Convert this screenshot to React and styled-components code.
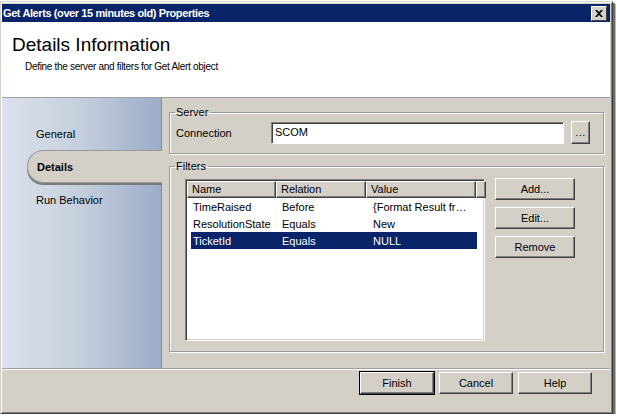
import React from 'react';
import styled, { createGlobalStyle } from 'styled-components';

const GlobalStyle = createGlobalStyle`
  html, body {
    margin: 0;
    padding: 0;
    background: #ffffff;
  }
  body {
    font-family: 'Liberation Sans', Arial, sans-serif;
    font-size: 11px;
    color: #000;
  }
`

const Window = styled.div`
  width: 613px;
  height: 413px;
  margin-top: 1px;
  display: flex;
  flex-direction: column;
  background: #d4d0c8;
  border-left: 1px solid #d4d0c8;
  border-top: 1px solid #d4d0c8;
  border-right: 1px solid #404040;
  border-bottom: 1px solid #404040;
  box-shadow: inset 1px 1px #ffffff, inset -1px -1px #808080, 2px 2px 0 #6a6a6a, 3px 3px 0 #b8b8b8;
  padding: 2px 2px 2px 1px;
  box-sizing: border-box;
`

const TitleBar = styled.div`
  height: 18px;
  flex: none;
  background: #0a246a;
  display: flex;
  align-items: center;
  justify-content: space-between;
  padding: 0 3px 0 1px;
`

const TitleText = styled.span`
  color: #fff;
  font-weight: bold;
  font-size: 11px;
  letter-spacing: -0.4px;
`

const CloseButton = styled.div`
  width: 14px;
  height: 13px;
  background: #d4d0c8;
  border-top: 1px solid #fff;
  border-left: 1px solid #fff;
  border-right: 1px solid #404040;
  border-bottom: 1px solid #404040;
  display: flex;
  align-items: center;
  justify-content: center;
`

const Header = styled.div`
  height: 76px;
  flex: none;
  background: #fff;
  border-bottom: 1px solid #a0a0a0;
  padding: 11px 0 0 10px;
  box-sizing: border-box;
`

const Heading = styled.div`
  font-size: 19px;
  line-height: 23px;
`

const SubHeading = styled.div`
  margin: 5px 0 0 13px;
  font-size: 10px;
  letter-spacing: -0.3px;
`

const Body = styled.div`
  flex: 1;
  display: flex;
  min-height: 0;
  border-bottom: 1px solid #a0a0a0;
  box-shadow: 0 1px 0 #fff;
`

const Sidebar = styled.div`
  width: 160px;
  flex: none;
  background: linear-gradient(to right, #dbe1ed 0%, #c8d1de 45%, #9cadca 100%);
  border-right: 1px solid #8a8a8a;
  padding-top: 19px;
  box-sizing: border-box;
  display: flex;
  flex-direction: column;
`

const NavItem = styled.div`
  height: 33px;
  display: flex;
  align-items: center;
  margin-left: 25px;
  margin-right: ${p => (p.$active ? '-1px' : '0')};
  padding-left: 9px;
  box-sizing: border-box;
  font-weight: ${p => (p.$active ? 'bold' : 'normal')};
  background: ${p => (p.$active ? '#d4d0c8' : 'transparent')};
  border-radius: ${p => (p.$active ? '16px 0 0 16px' : '0')};
  border: ${p => (p.$active ? '1px solid #9a9a9a' : 'none')};
  border-right: none;
  box-shadow: ${p => (p.$active ? '0 2px 0 #7a7a7a' : 'none')};
  position: relative;
  z-index: 1;
`

const Main = styled.div`
  flex: 1;
  padding: 8px 6px 0 7px;
  display: flex;
  flex-direction: column;
  gap: 6px;
`

const Group = styled.fieldset`
  margin: 0;
  padding: ${p => p.$pad || '0'};
  border: 1px solid #9a9a9a;
  box-shadow: inset 1px 1px #fff, 1px 1px #fff;
  height: ${p => p.$h};
  box-sizing: border-box;
`

const Legend = styled.legend`
  padding: 0 2px 0 1px;
  margin-left: 5px;
  font-size: 11px;
`

const Row = styled.div`
  display: flex;
  align-items: center;
`

const Label = styled.span`
  width: 95px;
  padding-left: 6px;
`

const TextBox = styled.div`
  width: 293px;
  height: 22px;
  box-sizing: border-box;
  background: #fff;
  border-top: 1px solid #808080;
  border-left: 1px solid #808080;
  border-right: 1px solid #fff;
  border-bottom: 1px solid #fff;
  box-shadow: inset 1px 1px #404040;
  padding: 3px 0 0 3px;
`

const Button = styled.div`
  width: ${p => p.$w || '80px'};
  height: ${p => p.$h || '22px'};
  box-sizing: border-box;
  background: #d4d0c8;
  display: flex;
  align-items: center;
  justify-content: center;
  border-top: 1px solid #fff;
  border-left: 1px solid #fff;
  border-right: 1px solid #404040;
  border-bottom: 1px solid #404040;
  box-shadow: inset -1px -1px #808080;
  outline: ${p => (p.$default ? '1px solid #000' : 'none')};
`

const BrowseButton = styled(Button)`
  width: 19px;
  height: 23px;
  margin-left: 7px;
  align-items: flex-end;
  padding-bottom: 5px;
  letter-spacing: 0.5px;
`

const FilterArea = styled.div`
  display: flex;
  gap: 10px;
  padding: 7px 0 0 15px;
`

const ListView = styled.div`
  width: 300px;
  height: 162px;
  box-sizing: border-box;
  background: #fff;
  border-top: 1px solid #808080;
  border-left: 1px solid #808080;
  border-right: 1px solid #fff;
  border-bottom: 1px solid #fff;
  box-shadow: inset 1px 1px #404040, inset -1px -1px #d4d0c8;
  padding: 1px 0 0 1px;
`

const HeaderRow = styled.div`
  display: flex;
  height: 17px;
`

const HeaderCell = styled.div`
  width: ${p => p.$w}px;
  flex: none;
  box-sizing: border-box;
  background: #d4d0c8;
  border-top: 1px solid #fff;
  border-left: 1px solid #fff;
  border-right: 1px solid #404040;
  border-bottom: 1px solid #404040;
  box-shadow: inset -1px -1px #808080;
  padding: 1px 0 0 4px;
  line-height: 13px;
`

const DataRow = styled.div`
  display: flex;
  height: 17px;
  align-items: center;
  margin-left: 4px;
  width: 286px;
  background: ${p => (p.$selected ? '#0a246a' : 'transparent')};
  color: ${p => (p.$selected ? '#fff' : '#000')};
`

const Cell = styled.div`
  width: ${p => p.$w}px;
  flex: none;
  padding-left: 2px;
  box-sizing: border-box;
  white-space: nowrap;
  overflow: hidden;
`

const ButtonColumn = styled.div`
  display: flex;
  flex-direction: column;
  gap: 7px;
  margin-top: -1px;
`

const Footer = styled.div`
  height: 42px;
  flex: none;
  display: flex;
  justify-content: flex-end;
  align-items: flex-start;
  padding: 3px 18px 0 0;
  box-sizing: border-box;
  gap: 5px;
`

const columns = [
  { name: 'Name', w: 89 },
  { name: 'Relation', w: 90 },
  { name: 'Value', w: 110 },
  { name: '', w: 10 },
]

const filters = [
  { name: 'TimeRaised', relation: 'Before', value: '{Format Result fr…' },
  { name: 'ResolutionState', relation: 'Equals', value: 'New' },
  { name: 'TicketId', relation: 'Equals', value: 'NULL', selected: true },
]

const App = () => {
  return (
    <>
      <GlobalStyle />
      <Window>
        <TitleBar>
          <TitleText>Get Alerts (over 15 minutes old) Properties</TitleText>
          <CloseButton>
            <svg width="8" height="7" viewBox="0 0 8 7">
              <path d="M0 0 L2 0 L4 2 L6 0 L8 0 L5 3.5 L8 7 L6 7 L4 5 L2 7 L0 7 L3 3.5 Z" fill="#000" />
            </svg>
          </CloseButton>
        </TitleBar>
        <Header>
          <Heading>Details Information</Heading>
          <SubHeading>Define the server and filters for Get Alert object</SubHeading>
        </Header>
        <Body>
          <Sidebar>
            <NavItem>General</NavItem>
            <NavItem $active>Details</NavItem>
            <NavItem>Run Behavior</NavItem>
          </Sidebar>
          <Main>
            <Group $h="48px" $pad="3px 0 0 0">
              <Legend>Server</Legend>
              <Row>
                <Label>Connection</Label>
                <TextBox>SCOM</TextBox>
                <BrowseButton>...</BrowseButton>
              </Row>
            </Group>
            <Group $h="192px">
              <Legend>Filters</Legend>
              <FilterArea>
                <ListView>
                  <HeaderRow>
                    {columns.map((c, i) => (
                      <HeaderCell key={i} $w={c.w}>{c.name}</HeaderCell>
                    ))}
                  </HeaderRow>
                  {filters.map((f) => (
                    <DataRow key={f.name} $selected={f.selected}>
                      <Cell $w={89}>{f.name}</Cell>
                      <Cell $w={91}>{f.relation}</Cell>
                      <Cell $w={106}>{f.value}</Cell>
                    </DataRow>
                  ))}
                </ListView>
                <ButtonColumn>
                  <Button>Add...</Button>
                  <Button>Edit...</Button>
                  <Button>Remove</Button>
                </ButtonColumn>
              </FilterArea>
            </Group>
          </Main>
        </Body>
        <Footer>
          <Button $w="74px" $default>Finish</Button>
          <Button $w="74px">Cancel</Button>
          <Button $w="74px">Help</Button>
        </Footer>
      </Window>
    </>
  )
}

export default App;
